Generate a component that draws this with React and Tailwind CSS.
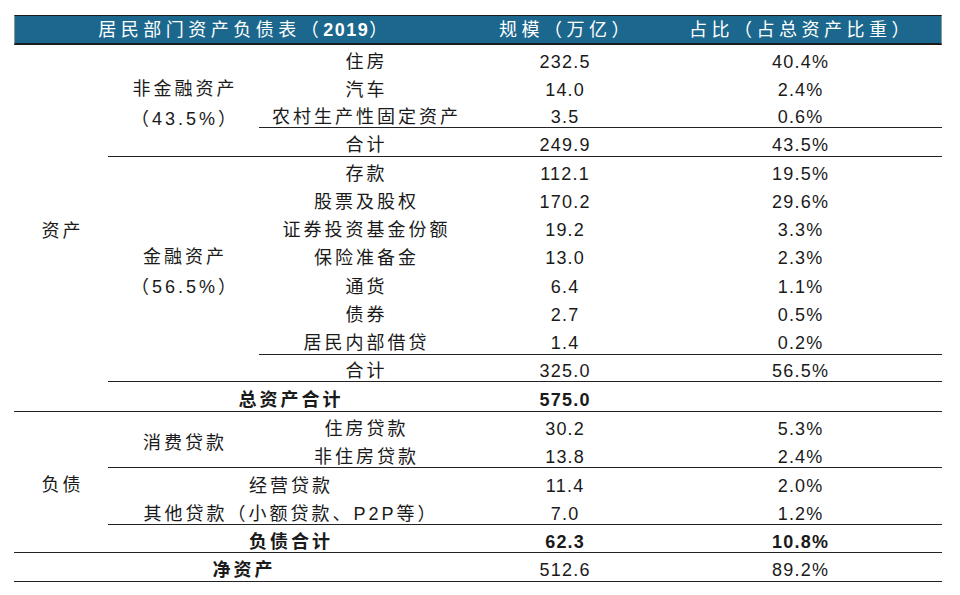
import React from 'react';

const font = { fontFamily: '"Liberation Sans", "Noto Sans CJK SC", sans-serif' };

const line = 'border-b-[1.5px] border-[#222222]';

const Cell = ({ children, className = '', bold = false, cjk = true }) => (
  <div
    className={`flex items-center justify-center whitespace-nowrap pt-[6px] text-[18px] leading-none text-[#1a1a1a] ${
      cjk ? 'tracking-[3px] pl-[3px]' : 'tracking-[1.2px] pl-[1.2px]'
    } ${bold ? 'font-bold' : ''} ${className}`}
  >
    {children}
  </div>
);

const HeadCell = ({ children, className = '' }) => (
  <div
    className={`flex items-center justify-center whitespace-nowrap bg-[#1c678d] pt-[1px] text-[18px] leading-none tracking-[4.5px] pl-[4px] text-white border-t-[1.5px] border-b-2 border-[#1b1b1b] ${className}`}
  >
    {children}
  </div>
);

const App = () => {
  return (
    <div className="min-h-screen bg-white pl-[14px] pt-[15px]" style={font}>
      <div className="grid w-[928px] grid-cols-[94px_151px_212px_187px_284px] grid-rows-[30px_28px_28px_27px_29px_28px_28px_28px_28px_29px_28px_29px_27px_30px_28px_28px_29px_28px_28px_29px]">
        {/* header */}
        <HeadCell className="col-span-3 border-l border-l-[#8a9aa4]">
          居民部门资产负债表（<span className="font-bold tracking-[1.5px]">2019</span>）
        </HeadCell>
        <HeadCell>规模（万亿）</HeadCell>
        <HeadCell className="border-r border-r-[#8a9aa4]">占比（占总资产比重）</HeadCell>

        {/* 资产 */}
        <Cell className={`row-span-13 ${line}`}>资产</Cell>
        <Cell className={`row-span-4 flex-col gap-[12px] ${line}`}>
          <span>非金融资产</span>
          <span>（43.5%）</span>
        </Cell>
        <Cell>住房</Cell>
        <Cell cjk={false}>232.5</Cell>
        <Cell cjk={false}>40.4%</Cell>

        <Cell>汽车</Cell>
        <Cell cjk={false}>14.0</Cell>
        <Cell cjk={false}>2.4%</Cell>

        <Cell className={line}>农村生产性固定资产</Cell>
        <Cell cjk={false} className={line}>3.5</Cell>
        <Cell cjk={false} className={line}>0.6%</Cell>

        <Cell className={line}>合计</Cell>
        <Cell cjk={false} className={line}>249.9</Cell>
        <Cell cjk={false} className={line}>43.5%</Cell>

        <Cell className={`row-span-8 flex-col gap-[12px] ${line}`}>
          <span>金融资产</span>
          <span>（56.5%）</span>
        </Cell>
        <Cell>存款</Cell>
        <Cell cjk={false}>112.1</Cell>
        <Cell cjk={false}>19.5%</Cell>

        <Cell>股票及股权</Cell>
        <Cell cjk={false}>170.2</Cell>
        <Cell cjk={false}>29.6%</Cell>

        <Cell>证券投资基金份额</Cell>
        <Cell cjk={false}>19.2</Cell>
        <Cell cjk={false}>3.3%</Cell>

        <Cell>保险准备金</Cell>
        <Cell cjk={false}>13.0</Cell>
        <Cell cjk={false}>2.3%</Cell>

        <Cell>通货</Cell>
        <Cell cjk={false}>6.4</Cell>
        <Cell cjk={false}>1.1%</Cell>

        <Cell>债券</Cell>
        <Cell cjk={false}>2.7</Cell>
        <Cell cjk={false}>0.5%</Cell>

        <Cell className={line}>居民内部借贷</Cell>
        <Cell cjk={false} className={line}>1.4</Cell>
        <Cell cjk={false} className={line}>0.2%</Cell>

        <Cell className={line}>合计</Cell>
        <Cell cjk={false} className={line}>325.0</Cell>
        <Cell cjk={false} className={line}>56.5%</Cell>

        <Cell bold className={`col-span-2 ${line}`}>总资产合计</Cell>
        <Cell bold cjk={false} className={line}>575.0</Cell>
        <Cell className={line}></Cell>

        {/* 负债 */}
        <Cell className={`row-span-5 ${line}`}>负债</Cell>
        <Cell className={`row-span-2 ${line}`}>消费贷款</Cell>
        <Cell>住房贷款</Cell>
        <Cell cjk={false}>30.2</Cell>
        <Cell cjk={false}>5.3%</Cell>

        <Cell className={line}>非住房贷款</Cell>
        <Cell cjk={false} className={line}>13.8</Cell>
        <Cell cjk={false} className={line}>2.4%</Cell>

        <Cell className="col-span-2">经营贷款</Cell>
        <Cell cjk={false}>11.4</Cell>
        <Cell cjk={false}>2.0%</Cell>

        <Cell className={`col-span-2 ${line}`}>其他贷款（小额贷款、P2P等）</Cell>
        <Cell cjk={false} className={line}>7.0</Cell>
        <Cell cjk={false} className={line}>1.2%</Cell>

        <Cell bold className={`col-span-2 ${line}`}>负债合计</Cell>
        <Cell bold cjk={false} className={line}>62.3</Cell>
        <Cell bold cjk={false} className={line}>10.8%</Cell>

        <Cell bold className={`col-span-3 ${line}`}>净资产</Cell>
        <Cell cjk={false} className={line}>512.6</Cell>
        <Cell cjk={false} className={line}>89.2%</Cell>
      </div>
    </div>
  );
};

export default App;
